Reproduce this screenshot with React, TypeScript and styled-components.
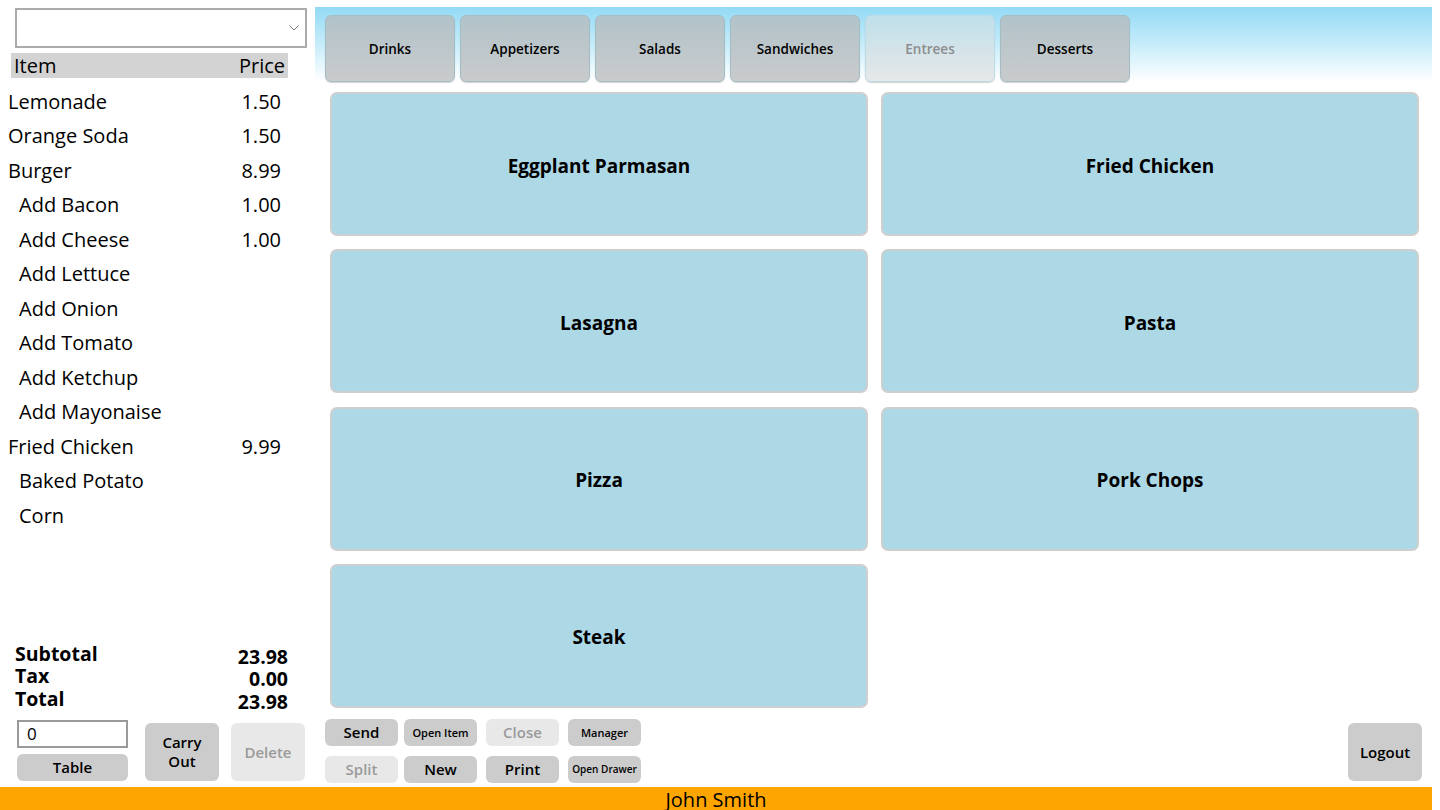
import React from "react";
import styled, { createGlobalStyle } from "styled-components";

const Global = createGlobalStyle`
  html, body { margin: 0; padding: 0; background: #fff; }
  body { font-family: "Open Sans", "Noto Sans", sans-serif; color: #000; }
  * { box-sizing: border-box; }
`;

const Window = styled.div`
  width: 1432px;
  height: 810px;
  display: grid;
  grid-template-rows: 787px 23px;
  overflow: hidden;
`;

const Main = styled.div`
  display: grid;
  grid-template-columns: 315px 1fr;
  min-height: 0;
`;

/* ---------- Left: order ticket ---------- */
const TicketPanel = styled.div`
  display: flex;
  flex-direction: column;
  min-height: 0;
`;

const Dropdown = styled.div`
  margin: 8px 8px 0 15px;
  height: 40px;
  border: 2px solid #ababab;
  background: #fff;
  display: flex;
  align-items: center;
  justify-content: flex-end;
  padding-right: 6px;
`;

const HeaderRow = styled.div`
  margin: 5px 0 0 11px;
  width: 277px;
  height: 25px;
  background: #d3d3d3;
  display: flex;
  justify-content: space-between;
  align-items: center;
  padding: 0 3px;
  font-size: 20px;
  line-height: 25px;
`;

const ItemList = styled.div`
  flex: 1;
  margin-top: 6px;
  display: flex;
  flex-direction: column;
`;

const ItemRow = styled.div<{ $sub?: boolean }>`
  height: 34.5px;
  width: 281px;
  display: flex;
  justify-content: space-between;
  align-items: center;
  padding-left: ${(p) => (p.$sub ? "19px" : "8px")};
  font-size: 20px;
`;

const Totals = styled.div`
  margin: 0 27px 0 15px;
  display: grid;
  grid-template-columns: 1fr auto;
  font-weight: 700;
  font-size: 19.5px;
  line-height: 22.5px;
`;

const Labels = styled.div`
  display: flex;
  flex-direction: column;
  padding-top: 1px;
`;

const Values = styled.div`
  display: flex;
  flex-direction: column;
  align-items: flex-end;
  padding-top: 4px;
`;

const TicketControls = styled.div`
  margin: 7px 0 6px 17px;
  display: grid;
  grid-template-columns: 128px 86px 74px;
  justify-items: start;
  align-items: end;
`;

const TableGroup = styled.div`
  width: 111px;
  display: grid;
  grid-template-rows: 28px 27px;
  row-gap: 6px;
`;

const TableInput = styled.div`
  border: 2px solid #9a9a9a;
  background: #fff;
  font-size: 17px;
  line-height: 24px;
  padding-left: 8px;
`;

const Btn = styled.button<{ $off?: boolean; $fs?: number; $h?: number; $w?: number }>`
  width: ${(p) => (p.$w ? `${p.$w}px` : "100%")};
  height: ${(p) => (p.$h ? `${p.$h}px` : "100%")};
  border: none;
  border-radius: 6px;
  background: ${(p) => (p.$off ? "#e8e8e8" : "#cccccc")};
  color: ${(p) => (p.$off ? "#9a9a9a" : "#000")};
  font-family: inherit;
  font-size: ${(p) => p.$fs ?? 15}px;
  font-weight: 600;
  line-height: 1.25;
  padding: 0;
  display: flex;
  align-items: center;
  justify-content: center;
  text-align: center;
`;

/* ---------- Right: menu ---------- */
const MenuPanel = styled.div`
  display: flex;
  flex-direction: column;
  min-height: 0;
`;

const CategoryBar = styled.div`
  margin-top: 7px;
  height: 74px;
  background: linear-gradient(to bottom, #93daf6 0%, #c6ecfa 50%, #ffffff 100%);
  display: flex;
  gap: 5px;
  padding: 8px 0 0 10px;
`;

const Tab = styled.div<{ $off?: boolean }>`
  width: 130px;
  height: 67px;
  flex: none;
  border-radius: 6px;
  border: 1px solid ${(p) => (p.$off ? "#bcdbe6" : "#a4bcc4")};
  background: ${(p) =>
    p.$off
      ? "linear-gradient(to bottom, #bfdfea, #e6e8e9)"
      : "linear-gradient(to bottom, #b2c3c9, #c9cbcc)"};
  box-shadow: 0 1px 1px rgba(0, 0, 0, 0.18);
  color: ${(p) => (p.$off ? "#8c8c8c" : "#000")};
  font-size: 13.5px;
  font-weight: 600;
  display: flex;
  align-items: center;
  justify-content: center;
`;

const MenuGrid = styled.div`
  margin: 11px 0 0 15px;
  width: 1089px;
  display: grid;
  grid-template-columns: 538px 538px;
  grid-auto-rows: 144px;
  column-gap: 13px;
  row-gap: 13.3px;
`;

const MenuItem = styled.div`
  background: #add8e6;
  border: 2px solid #cfcfcf;
  border-radius: 7px;
  display: flex;
  align-items: center;
  justify-content: center;
  padding-top: 3px;
  font-size: 19px;
  font-weight: 700;
`;

const BottomBar = styled.div`
  margin-top: auto;
  display: flex;
  justify-content: space-between;
  align-items: flex-end;
  padding: 0 10px 4px 10px;
`;

const ActionGrid = styled.div`
  display: grid;
  grid-template-columns: 79px 82px 82px 73px;
  grid-template-rows: 27px 27px;
  row-gap: 10px;
`;

const LogoutWrap = styled.div`
  margin-bottom: 2px;
`;

const StatusBar = styled.div`
  background: #ffa500;
  display: flex;
  align-items: center;
  justify-content: center;
  font-size: 20px;
  line-height: 23px;
  padding-top: 2px;
`;

const items: { name: string; price?: string; sub?: boolean }[] = [
  { name: "Lemonade", price: "1.50" },
  { name: "Orange Soda", price: "1.50" },
  { name: "Burger", price: "8.99" },
  { name: "Add Bacon", price: "1.00", sub: true },
  { name: "Add Cheese", price: "1.00", sub: true },
  { name: "Add Lettuce", sub: true },
  { name: "Add Onion", sub: true },
  { name: "Add Tomato", sub: true },
  { name: "Add Ketchup", sub: true },
  { name: "Add Mayonaise", sub: true },
  { name: "Fried Chicken", price: "9.99" },
  { name: "Baked Potato", sub: true },
  { name: "Corn", sub: true },
];

const tabs = ["Drinks", "Appetizers", "Salads", "Sandwiches", "Entrees", "Desserts"];
const menu = ["Eggplant Parmasan", "Fried Chicken", "Lasagna", "Pasta", "Pizza", "Pork Chops", "Steak"];

const Chevron = () => (
  <svg width="10" height="6" viewBox="0 0 10 6">
    <path d="M0.5 0.5 L5 5 L9.5 0.5" fill="none" stroke="#7a7a7a" strokeWidth="1" />
  </svg>
);

export default function App() {
  return (
    <>
      <Global />
      <Window>
        <Main>
          <TicketPanel>
            <Dropdown>
              <Chevron />
            </Dropdown>
            <HeaderRow>
              <span>Item</span>
              <span>Price</span>
            </HeaderRow>
            <ItemList>
              {items.map((it, i) => (
                <ItemRow key={i} $sub={it.sub}>
                  <span>{it.name}</span>
                  <span>{it.price ?? ""}</span>
                </ItemRow>
              ))}
            </ItemList>
            <Totals>
              <Labels>
                <span>Subtotal</span>
                <span>Tax</span>
                <span>Total</span>
              </Labels>
              <Values>
                <span>23.98</span>
                <span>0.00</span>
                <span>23.98</span>
              </Values>
            </Totals>
            <TicketControls>
              <TableGroup>
                <TableInput>0</TableInput>
                <Btn $fs={15}>Table</Btn>
              </TableGroup>
              <Btn $w={74} $h={58} $fs={15}>
                Carry
                <br />
                Out
              </Btn>
              <Btn $w={74} $h={58} $fs={15} $off>
                Delete
              </Btn>
            </TicketControls>
          </TicketPanel>
          <MenuPanel>
            <CategoryBar>
              {tabs.map((t) => (
                <Tab key={t} $off={t === "Entrees"}>
                  {t}
                </Tab>
              ))}
            </CategoryBar>
            <MenuGrid>
              {menu.map((m) => (
                <MenuItem key={m}>{m}</MenuItem>
              ))}
            </MenuGrid>
            <BottomBar>
              <ActionGrid>
                <Btn $w={73} $fs={15}>Send</Btn>
                <Btn $w={73} $fs={11}>Open Item</Btn>
                <Btn $w={73} $fs={15} $off>Close</Btn>
                <Btn $w={73} $fs={11}>Manager</Btn>
                <Btn $w={73} $fs={15} $off>Split</Btn>
                <Btn $w={73} $fs={15}>New</Btn>
                <Btn $w={73} $fs={15}>Print</Btn>
                <Btn $w={73} $fs={10}>Open Drawer</Btn>
              </ActionGrid>
              <LogoutWrap>
                <Btn $w={74} $h={58} $fs={15}>Logout</Btn>
              </LogoutWrap>
            </BottomBar>
          </MenuPanel>
        </Main>
        <StatusBar>John Smith</StatusBar>
      </Window>
    </>
  );
}
